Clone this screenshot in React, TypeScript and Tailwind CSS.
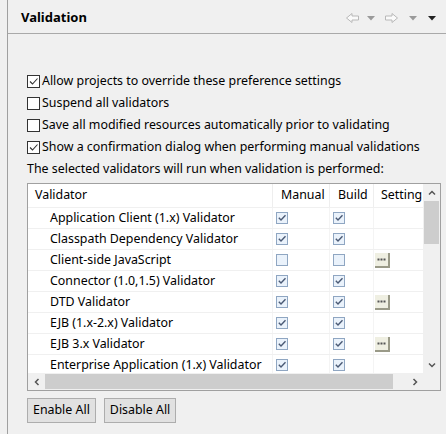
import React from "react";

const font = { fontFamily: '"Noto Sans", "Open Sans", sans-serif' };

function Box({ checked }: { checked: boolean }) {
  return (
    <span className="w-[13px] h-[13px] border border-[#333333] bg-white flex items-center justify-center shrink-0">
      {checked && (
        <svg width="11" height="11" viewBox="0 0 11 11">
          <path d="M2 5.5 L4.5 8 L9.5 2.5" fill="none" stroke="#333" strokeWidth="1.1" />
        </svg>
      )}
    </span>
  );
}

function TBox({ checked }: { checked: boolean }) {
  return (
    <span className="w-[12px] h-[12px] border border-[#8fa6c2] bg-[#eaf2fb] flex items-center justify-center">
      {checked && (
        <svg width="10" height="10" viewBox="0 0 10 10">
          <path d="M1.8 4.8 L4 7 L8.5 2.3" fill="none" stroke="#4a5a75" strokeWidth="1.4" />
        </svg>
      )}
    </span>
  );
}

function Dots() {
  return (
    <span className="w-[15px] h-[15px] bg-[#efefe2] border-r-2 border-b-2 border-[#9a9a88] flex items-center justify-center">
      <svg width="9" height="3" viewBox="0 0 9 3">
        <rect x="0.5" y="0.5" width="2" height="2" fill="#555" />
        <rect x="3.5" y="0.5" width="2" height="2" fill="#555" />
        <rect x="6.5" y="0.5" width="2" height="2" fill="#555" />
      </svg>
    </span>
  );
}

const rows: [string, boolean, boolean, boolean][] = [
  ["Application Client (1.x) Validator", true, true, false],
  ["Classpath Dependency Validator", true, true, false],
  ["Client-side JavaScript", false, false, true],
  ["Connector (1.0,1.5) Validator", true, true, false],
  ["DTD Validator", true, true, true],
  ["EJB (1.x-2.x) Validator", true, true, false],
  ["EJB 3.x Validator", true, true, true],
  ["Enterprise Application (1.x) Validator", true, true, false],
];

function Arrow({ dir }: { dir: "l" | "r" }) {
  return (
    <svg width="15" height="12" viewBox="0 0 15 12" className={dir === "r" ? "" : "-scale-x-100"}>
      <path d="M1.5 4 H8 V1.5 L13.5 6 L8 10.5 V8 H1.5 Z" fill="#fafafa" stroke="#b8b8b8" strokeWidth="1" />
    </svg>
  );
}

function Tri({ dark }: { dark?: boolean }) {
  return (
    <svg width="8" height="5" viewBox="0 0 8 5">
      <path d="M0 0 H8 L4 4.5 Z" fill={dark ? "#222" : "#9a9a9a"} />
    </svg>
  );
}

function Chevron({ d }: { d: string }) {
  return (
    <svg width="8" height="8" viewBox="0 0 8 8">
      <path d={d} fill="none" stroke="#555" strokeWidth="1.5" />
    </svg>
  );
}

const opts: [string, boolean][] = [
  ["Allow projects to override these preference settings", true],
  ["Suspend all validators", false],
  ["Save all modified resources automatically prior to validating", false],
  ["Show a confirmation dialog when performing manual validations", true],
];

export default function App() {
  return (
    <div className="w-[446px] h-[434px] bg-[#f0f0f0] text-[12.4px] text-black overflow-hidden" style={font}>
      <div className="ml-[7px] h-full border-l border-[#a0a0a0] flex flex-col">
        <div className="mt-[3px] h-[31px] border-b border-[#a9a9a9] flex items-center pl-[13px] pr-[10px]">
          <span className="font-bold text-[13px] flex-1">Validation</span>
          <div className="flex items-center">
            <Arrow dir="l" />
            <span className="w-[7px]" />
            <Tri />
            <span className="w-[9px]" />
            <Arrow dir="r" />
            <span className="w-[10px]" />
            <Tri />
            <span className="w-[11px]" />
            <Tri dark />
          </div>
        </div>
        <div className="pl-[19px] pr-[5px] pt-[36px] flex flex-col">
          {opts.map(([t, c]) => (
            <div key={t} className="h-[22px] flex items-center gap-[2px]">
              <Box checked={c} />
              <span>{t}</span>
            </div>
          ))}
          <div className="h-[22px] flex items-center">The selected validators will run when validation is performed:</div>
          <div className="mt-[3px] h-[208px] border border-[#a0a0a0] bg-white flex flex-col">
            <div className="flex flex-1 min-h-0">
              <div className="flex-1 flex flex-col overflow-hidden">
                <div className="h-[24px] shrink-0 flex border-b border-[#f0f0f0]">
                  <div className="w-[244px] pl-[7px] flex items-center">Validator</div>
                  <div className="w-[57px] pl-[8px] flex items-center border-l border-[#eeeeee]">Manual</div>
                  <div className="w-[44px] pl-[8px] flex items-center border-l border-[#eeeeee]">Build</div>
                  <div className="flex-1 pl-[7px] flex items-center border-l border-[#eeeeee] overflow-hidden whitespace-nowrap">Setting</div>
                </div>
                {rows.map(([n, m, b, s]) => (
                  <div key={n} className="h-[21px] shrink-0 flex border-b border-[#f0f0f0]">
                    <div className="w-[244px] pl-[22px] flex items-center whitespace-nowrap">{n}</div>
                    <div className="w-[57px] pl-[3px] flex items-center border-l border-[#f4f4f4]">
                      <TBox checked={m} />
                    </div>
                    <div className="w-[44px] pl-[3px] flex items-center border-l border-[#f4f4f4]">
                      <TBox checked={b} />
                    </div>
                    <div className="flex-1 pl-[1px] flex items-center border-l border-[#f4f4f4]">
                      {s && <Dots />}
                    </div>
                  </div>
                ))}
              </div>
              <div className="w-[17px] shrink-0 bg-[#f0f0f0] flex flex-col items-center">
                <div className="h-[17px] flex items-center justify-center">
                  <Chevron d="M1 5.5 L4 2.5 L7 5.5" />
                </div>
                <div className="w-[15px] h-[43px] bg-[#cdcdcd]" />
                <div className="flex-1" />
                <div className="h-[17px] flex items-center justify-center">
                  <Chevron d="M1 2.5 L4 5.5 L7 2.5" />
                </div>
              </div>
            </div>
            <div className="h-[17px] shrink-0 flex bg-[#f0f0f0]">
              <div className="w-[17px] flex items-center justify-center">
                <Chevron d="M5.5 1 L2.5 4 L5.5 7" />
              </div>
              <div className="w-[348px] my-[1px] bg-[#cdcdcd]" />
              <div className="flex-1" />
              <div className="w-[17px] flex items-center justify-center">
                <Chevron d="M2.5 1 L5.5 4 L2.5 7" />
              </div>
              <div className="w-[17px]" />
            </div>
          </div>
          <div className="flex gap-[8px] mt-[7px]">
            <button className="h-[25px] px-[5px] bg-[#e1e1e1] border border-[#adadad]">Enable All</button>
            <button className="h-[25px] px-[5px] bg-[#e1e1e1] border border-[#adadad]">Disable All</button>
          </div>
        </div>
      </div>
    </div>
  );
}
